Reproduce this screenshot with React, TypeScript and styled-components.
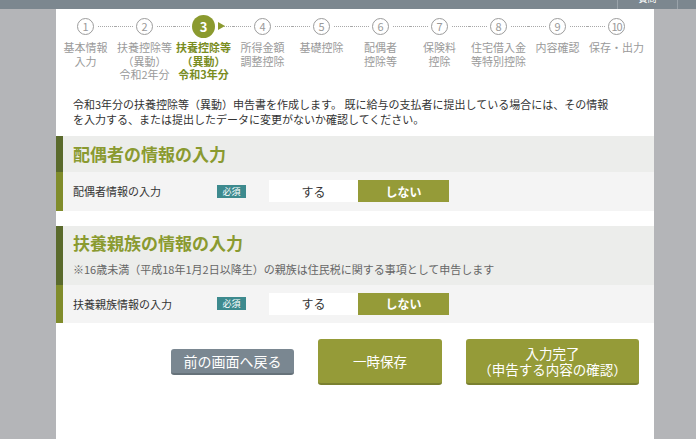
import React from 'react';
import styled, { createGlobalStyle, css } from 'styled-components';

const GlobalStyle = createGlobalStyle`
  html, body { margin: 0; padding: 0; }
  body {
    background: #b4b5b8;
    font-family: "Noto Sans CJK JP", "Noto Sans", sans-serif;
  }
  * { box-sizing: border-box; }
`;

const Page = styled.div`
  width: 696px;
  height: 439px;
  overflow: hidden;
  display: flex;
  flex-direction: column;
`;

const TopBar = styled.header`
  height: 9px;
  flex-shrink: 0;
  background: #7c878f;
  display: flex;
  justify-content: flex-end;
  overflow: hidden;
`;

const TopItem = styled.div<{ $w: number }>`
  width: ${(p) => p.$w}px;
  border-left: 1px solid #9aa3aa;
  display: flex;
  justify-content: center;
  align-items: flex-end;
  color: #fff;
  font-size: 9px;
  line-height: 9px;
  & > span { margin-bottom: 6px; }
`;

const Body = styled.div`
  flex: 1;
  display: flex;
`;

const Gutter = styled.div`
  width: 56px;
  flex-shrink: 0;
`;

const Panel = styled.main`
  width: 598px;
  background: #fff;
  display: flex;
  flex-direction: column;
`;

const Stepper = styled.ol`
  list-style: none;
  margin: 0;
  padding: 4px 0 0;
  display: grid;
  grid-template-columns: repeat(10, 59px);
`;

const Step = styled.li`
  display: flex;
  flex-direction: column;
  align-items: center;
`;

const NodeRow = styled.div<{ $first: boolean; $last: boolean }>`
  position: relative;
  width: 100%;
  height: 26px;
  display: flex;
  align-items: center;
  justify-content: center;
  &::before, &::after {
    content: '';
    position: absolute;
    top: 13px;
    width: 50%;
    border-top: 1px dotted #a8a8a8;
  }
  &::before { left: 0; display: ${(p) => (p.$first ? 'none' : 'block')}; }
  &::after { right: 0; display: ${(p) => (p.$last ? 'none' : 'block')}; }
`;

const Circle = styled.span<{ $active: boolean; $two: boolean }>`
  position: relative;
  z-index: 1;
  width: 17px;
  height: 17px;
  border-radius: 50%;
  border: 1px solid #9c9c9c;
  background: #fff;
  box-shadow: 0 0 0 3px #fff;
  color: #9a9a9a;
  font-size: 11px;
  line-height: 1;
  display: flex;
  align-items: center;
  justify-content: center;
  letter-spacing: ${(p) => (p.$two ? '-1px' : '0')};
  ${(p) =>
    p.$active &&
    css`
      width: 23px;
      height: 23px;
      border: none;
      background: #8b9a2f;
      box-shadow: 0 0 0 2px #fff;
      color: #fff;
      font-weight: bold;
      font-size: 13px;
      &::after {
        content: '';
        position: absolute;
        left: 100%;
        top: 50%;
        margin-left: 3px;
        margin-top: -4px;
        border-left: 7px solid #8b9a2f;
        border-top: 4px solid transparent;
        border-bottom: 4px solid transparent;
      }
    `}
`;

const StepLabel = styled.div<{ $active: boolean }>`
  margin-top: 2px;
  font-size: 11px;
  line-height: 13.5px;
  color: #9a9a9a;
  text-align: center;
  white-space: nowrap;
  ${(p) => p.$active && css`color: #7a8d1f; font-weight: bold;`}
`;

const LabelLine = styled.span`
  display: block;
`;

const Intro = styled.p`
  margin: 15px 0 0;
  padding: 0 17px;
  font-size: 11px;
  line-height: 15px;
  color: #333;
  white-space: nowrap;
`;

const Section = styled.section<{ $mt: number }>`
  margin-top: ${(p) => p.$mt}px;
`;

const SectionHeader = styled.div<{ $tall: boolean }>`
  background: #ecedeb;
  border-left: 7px solid #5a6a2c;
  padding: ${(p) => (p.$tall ? '6px 10px 7px' : '0 10px')};
  height: ${(p) => (p.$tall ? '59px' : '36px')};
  display: flex;
  flex-direction: column;
  justify-content: ${(p) => (p.$tall ? 'flex-start' : 'center')};
`;

const SectionTitle = styled.h2`
  margin: 0;
  font-size: 17px;
  line-height: 22px;
  font-weight: bold;
  color: #8a9a30;
`;

const Note = styled.p`
  margin: 8px 0 0;
  font-size: 11px;
  line-height: 15px;
  color: #666;
  white-space: nowrap;
`;

const FieldRow = styled.div<{ $h: number }>`
  height: ${(p) => p.$h}px;
  background: #f4f4f4;
  border-left: 7px solid #808c2b;
  padding-left: 10px;
  display: flex;
  align-items: center;
`;

const FieldLabel = styled.span`
  width: 144px;
  font-size: 11px;
  color: #333;
`;

const Required = styled.span`
  width: 29px;
  height: 13px;
  margin-right: 23px;
  background: #3d8a8e;
  color: #fff;
  font-size: 9px;
  display: flex;
  align-items: center;
  justify-content: center;
`;

const Toggle = styled.div`
  display: flex;
  height: 22px;
`;

const ToggleOption = styled.button<{ $selected: boolean; $w: number }>`
  width: ${(p) => p.$w}px;
  height: 22px;
  border: none;
  padding: 0;
  font-family: inherit;
  font-size: 12px;
  cursor: pointer;
  background: ${(p) => (p.$selected ? '#959b38' : '#fff')};
  color: ${(p) => (p.$selected ? '#fff' : '#333')};
  font-weight: ${(p) => (p.$selected ? 'bold' : 'normal')};
`;

const Actions = styled.div`
  margin-top: 16px;
  padding-left: 115px;
  display: flex;
  align-items: center;
  gap: 24px;
`;

const BackButton = styled.button`
  width: 123px;
  height: 26px;
  border: none;
  border-bottom: 2px solid #66727a;
  border-radius: 3px;
  background: #7a8791;
  color: #fff;
  font-family: inherit;
  font-size: 14px;
  padding: 0;
`;

const PrimaryButton = styled.button<{ $w: number }>`
  width: ${(p) => p.$w}px;
  height: 46px;
  border: none;
  border-bottom: 2px solid #7a8030;
  border-radius: 3px;
  background: #959b38;
  color: #fff;
  font-family: inherit;
  font-size: 13.5px;
  line-height: 16px;
  padding: 0;
`;

const steps: { n: number; label: string[] }[] = [
  { n: 1, label: ['基本情報', '入力'] },
  { n: 2, label: ['扶養控除等', '（異動）', '令和2年分'] },
  { n: 3, label: ['扶養控除等', '（異動）', '令和3年分'] },
  { n: 4, label: ['所得金額', '調整控除'] },
  { n: 5, label: ['基礎控除'] },
  { n: 6, label: ['配偶者', '控除等'] },
  { n: 7, label: ['保険料', '控除'] },
  { n: 8, label: ['住宅借入金', '等特別控除'] },
  { n: 9, label: ['内容確認'] },
  { n: 10, label: ['保存・出力'] },
];

const ACTIVE = 3;

function Choice() {
  return (
    <Toggle>
      <ToggleOption $selected={false} $w={89}>する</ToggleOption>
      <ToggleOption $selected $w={91}>しない</ToggleOption>
    </Toggle>
  );
}

export default function App() {
  return (
    <>
      <GlobalStyle />
      <Page>
        <TopBar>
          <TopItem $w={60}><span>質問</span></TopItem>
          <TopItem $w={19} />
        </TopBar>
        <Body>
          <Gutter />
          <Panel>
            <Stepper>
              {steps.map((s, i) => (
                <Step key={s.n}>
                  <NodeRow $first={i === 0} $last={i === steps.length - 1}>
                    <Circle $active={s.n === ACTIVE} $two={s.n >= 10}>{s.n}</Circle>
                  </NodeRow>
                  <StepLabel $active={s.n === ACTIVE}>
                    {s.label.map((l, j) => (
                      <LabelLine key={j}>{l}</LabelLine>
                    ))}
                  </StepLabel>
                </Step>
              ))}
            </Stepper>

            <Intro>
              令和3年分の扶養控除等（異動）申告書を作成します。 既に給与の支払者に提出している場合には、その情報
              <br />
              を入力する、または提出したデータに変更がないか確認してください。
            </Intro>

            <Section $mt={9}>
              <SectionHeader $tall={false}>
                <SectionTitle>配偶者の情報の入力</SectionTitle>
              </SectionHeader>
              <FieldRow $h={39}>
                <FieldLabel>配偶者情報の入力</FieldLabel>
                <Required>必須</Required>
                <Choice />
              </FieldRow>
            </Section>

            <Section $mt={15}>
              <SectionHeader $tall>
                <SectionTitle>扶養親族の情報の入力</SectionTitle>
                <Note>※16歳未満（平成18年1月2日以降生）の親族は住民税に関する事項として申告します</Note>
              </SectionHeader>
              <FieldRow $h={38}>
                <FieldLabel>扶養親族情報の入力</FieldLabel>
                <Required>必須</Required>
                <Choice />
              </FieldRow>
            </Section>

            <Actions>
              <BackButton>前の画面へ戻る</BackButton>
              <PrimaryButton $w={124}>一時保存</PrimaryButton>
              <PrimaryButton $w={173}>
                入力完了
                <br />
                （申告する内容の確認）
              </PrimaryButton>
            </Actions>
          </Panel>
        </Body>
      </Page>
    </>
  );
}
